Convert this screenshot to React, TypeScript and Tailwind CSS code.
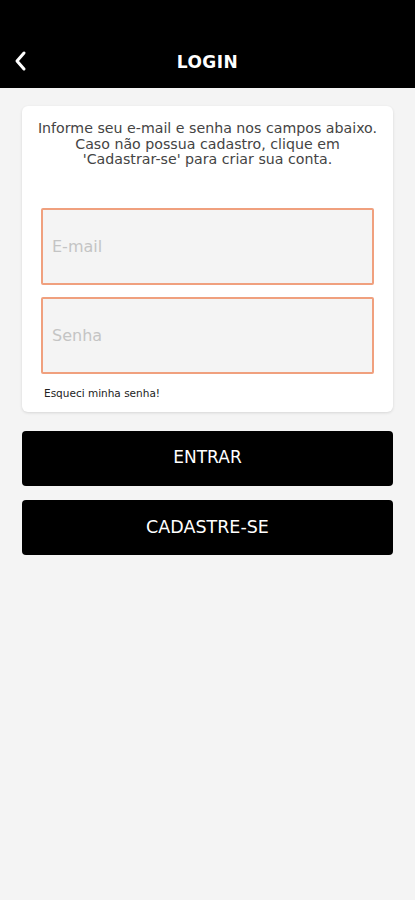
import React from 'react';

const App: React.FC = () => {
  return (
    <div
      className="min-h-[900px] w-full bg-[#f4f4f4]"
      style={{ fontFamily: '"DejaVu Sans", "Noto Sans", sans-serif' }}
    >
      {/* Header */}
      <header className="relative flex h-[88px] items-end justify-center bg-black pb-[13px]">
        <button className="absolute left-[12px] bottom-[16px] text-white">
          <svg width="18" height="22" viewBox="0 0 18 22" fill="none">
            <path d="M12 3 L5 11 L12 19" stroke="white" strokeWidth="3" strokeLinecap="round" strokeLinejoin="round" />
          </svg>
        </button>
        <h1 className="text-[17px] font-bold tracking-[0.5px] text-white">LOGIN</h1>
      </header>

      <main className="px-[22px] pt-[18px]">
        {/* Card */}
        <div className="rounded-[6px] bg-white px-[19px] pb-[12px] pt-[15px] shadow-[0_1px_3px_rgba(0,0,0,0.12)]">
          <p className="-mx-[12px] whitespace-nowrap text-center text-[14.2px] leading-[15.5px] text-[#444]">
            Informe seu e-mail e senha nos campos abaixo.
            <br />
            Caso não possua cadastro, clique em
            <br />
            'Cadastrar-se' para criar sua conta.
          </p>

          <div className="mt-[40px] flex flex-col gap-[12px]">
            <input
              placeholder="E-mail"
              className="h-[77px] w-full rounded-[2px] border-2 border-[#f0a07e] bg-[#f4f4f4] px-[9px] text-[16px] text-[#333] placeholder:text-[#c4c4c4] outline-none"
            />
            <input
              type="password"
              placeholder="Senha"
              className="h-[77px] w-full rounded-[2px] border-2 border-[#f0a07e] bg-[#f4f4f4] px-[9px] text-[16px] text-[#333] placeholder:text-[#c4c4c4] outline-none"
            />
          </div>

          <p className="mt-[12px] pl-[3px] text-[10.5px] leading-[14px] text-[#222]">Esqueci minha senha!</p>
        </div>

        {/* Buttons */}
        <div className="mt-[19px] flex flex-col gap-[14px]">
          <button className="h-[55px] w-full rounded-[4px] bg-black text-[17px] text-white">ENTRAR</button>
          <button className="h-[55px] w-full rounded-[4px] bg-black text-[17.5px] text-white">CADASTRE-SE</button>
        </div>
      </main>
    </div>
  );
};

export default App;
